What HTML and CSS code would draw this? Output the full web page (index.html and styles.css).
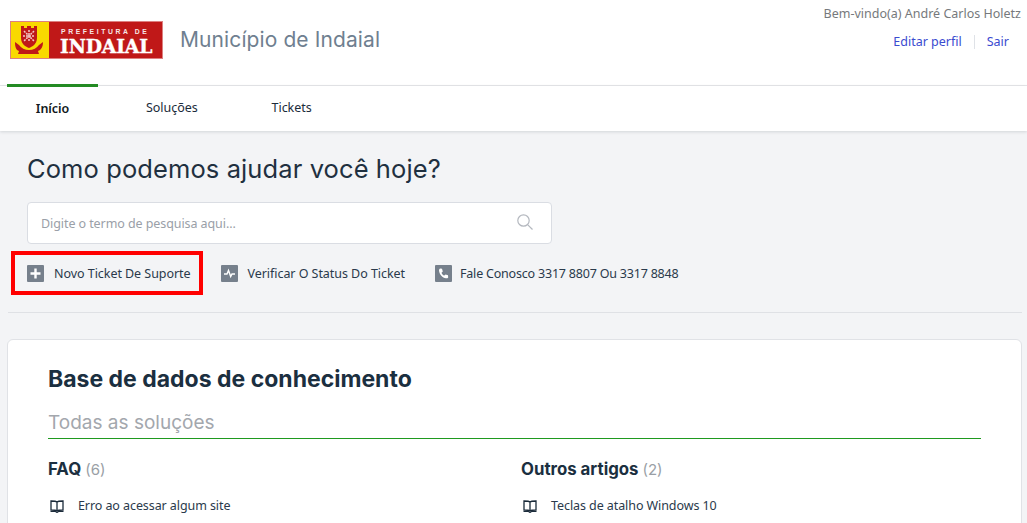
FILE: index.html
```html
<!DOCTYPE html>
<html lang="pt">
<head>
<meta charset="utf-8">
<title>Município de Indaial</title>
<link rel="stylesheet" href="styles.css">
</head>
<body>
<header class="top">
  <div class="brand">
    <svg class="logo" width="153" height="38" viewBox="0 0 153 38">
      <rect x="0" y="0" width="153" height="38" fill="#c01818"/>
      <rect x="0.5" y="0.5" width="152" height="37" fill="none" stroke="#dd8080"/>
      <rect x="1" y="1" width="38" height="36" fill="#f9d900"/>
      <path d="M11 5h3v2h3V5h4v2h3V5h3v12c0 6-5 9-8 10-3-1-8-4-8-10z" fill="#c01818"/>
      <path d="M5 21l4 3c2 3 6 5 10 5s8-2 10-5l4-3c0 5-2 8-5 9l1 3H8l1-3c-3-1-4-4-4-9z" fill="#c01818"/>
      <path d="M14 10l10 10M24 10L14 20M19 9v12M13 15h12" stroke="#f3c8c8" stroke-width="1.500" stroke-dasharray="2 1"/>
      <text x="51" y="13" class="logo-small">PREFEITURA DE</text>
      <text x="50" y="32" class="logo-big">INDAIAL</text>
    </svg>
    <span class="org">Município de Indaial</span>
  </div>
  <div class="user">
    <div class="welcome">Bem-vindo(a) André Carlos Holetz</div>
    <div class="user-links"><a href="#">Editar perfil</a><i class="pipe"></i><a href="#">Sair</a></div>
  </div>
</header>
<nav class="tabs">
  <a class="tab tab-active" href="#">Início</a>
  <a class="tab tab-sol" href="#">Soluções</a>
  <a class="tab tab-tic" href="#">Tickets</a>
</nav>
<main class="hero">
  <h1>Como podemos ajudar você hoje?</h1>
  <div class="search">
    <span>Digite o termo de pesquisa aqui...</span>
    <svg width="18" height="18" viewBox="0 0 18 18" fill="none" stroke="#b4b8bf" stroke-width="1.2"><circle cx="7.5" cy="7.5" r="5.7"/><path d="M11.8 11.8L16.5 16.5"/></svg>
  </div>
  <div class="actions">
    <a class="action action-first" href="#">
      <span class="ico"><svg width="17" height="17" viewBox="0 0 17 17"><path d="M8.5 3.5v10M3.5 8.5h10" stroke="#fff" stroke-width="2.4"/></svg></span>
      Novo Ticket De Suporte
      <span class="mark"></span>
    </a>
    <a class="action action-second" href="#">
      <span class="ico"><svg width="17" height="17" viewBox="0 0 17 17" fill="none"><path d="M3 9h3l1.5-3.5 2.2 6L11 9h3" stroke="#fff" stroke-width="1.4"/></svg></span>
      Verificar O Status Do Ticket
    </a>
    <a class="action action-third" href="#">
      <span class="ico"><svg width="17" height="17" viewBox="0 0 17 17"><path d="M5 3.5l2 .3.8 2.7-1.3 1.2c.5 1.3 1.4 2.3 2.8 2.9l1.3-1.2 2.4.9.2 2.1c-.5.8-1.4 1-2.3.9C7.500 12.800 4.500 9.800 4 5.500c0-.8.400-1.600 1-2z" fill="#fff"/></svg></span>
      Fale Conosco 3317 8807 Ou 3317 8848
    </a>
  </div>
  <hr class="sep">
  <section class="card">
    <h2>Base de dados de conhecimento</h2>
    <h3>Todas as soluções</h3>
    <div class="cols">
      <div class="col">
        <h4>FAQ <span>(6)</span></h4>
        <a class="art" href="#"><svg width="14" height="13" viewBox="0 0 14 13" fill="none" stroke="#1b2b3a" stroke-width="1.300"><path d="M7 2C6 1 4 1 1 1v9c3 0 5 0 6 1 1-1 3-1 6-1V1c-3 0-5 0-6 1zM7 2v9"/><path d="M0.500 11.500h5l1.500 1 1.500-1h5" stroke-width="1.200"/></svg>Erro ao acessar algum site</a>
      </div>
      <div class="col">
        <h4>Outros artigos <span>(2)</span></h4>
        <a class="art" href="#"><svg width="14" height="13" viewBox="0 0 14 13" fill="none" stroke="#1b2b3a" stroke-width="1.300"><path d="M7 2C6 1 4 1 1 1v9c3 0 5 0 6 1 1-1 3-1 6-1V1c-3 0-5 0-6 1zM7 2v9"/><path d="M0.500 11.500h5l1.500 1 1.500-1h5" stroke-width="1.200"/></svg>Teclas de atalho Windows 10</a>
      </div>
    </div>
  </section>
</main>
</body>
</html>
```
FILE: styles.css
```css
* { box-sizing: border-box; }
html, body { margin: 0; height: 523px; overflow: hidden; }
body { background: #f3f4f6; font-family: "Noto Sans", "Open Sans", sans-serif; color: #1b2b3a; }
a { text-decoration: none; color: inherit; }

.top { height: 86px; background: #fff; border-bottom: 1px solid #e6e7ea; display: flex; justify-content: space-between; padding: 0 6px 0 10px; }
.brand { display: flex; align-items: flex-start; padding-top: 21px; }
.logo { display: block; }
.logo-small { font: bold 6.800px "Liberation Sans", sans-serif; fill: #f6e6e6; letter-spacing: 2.600px; }
.logo-big { font: 900 18.800px "DejaVu Serif", serif; fill: #fff; stroke: #fff; stroke-width: .4px; letter-spacing: -.15px; }
.org { margin-left: 17px; margin-top: 5px; font: 400 21px/28px Inter, sans-serif; color: #6f7f90; letter-spacing: .1px; }
.user { padding-top: 6px; font-size: 12.500px; line-height: 16px; text-align: right; }
.welcome { color: #76797c; }
.user-links { margin-top: 12px; padding-right: 12px; display: flex; justify-content: flex-end; align-items: center; color: #3a4bd0; }
.pipe { width: 1px; height: 14px; background: #dfe2e7; margin: 0 12px; }

.tabs { height: 45px; background: #fff; display: flex; padding-left: 7px; box-shadow: 0 1px 3px rgba(40,50,70,.16); position: relative; }
.tab { font-size: 12.500px; line-height: 44px; letter-spacing: -.05px; color: #1b2b3a; }
.tab-active { width: 91px; text-align: center; border-top: 3px solid #238b23; margin-top: -2px; font-weight: 600; color: #101820; }
.tab-sol { margin-left: 48px; }
.tab-tic { margin-left: 74px; }

.hero { padding: 0 5px 0 7px; }
.hero h1 { margin: 22px 0 0 20px; font: 400 25.500px/32px Inter, sans-serif; color: #1f3040; letter-spacing: .1px; }
.search { margin: 17px 0 0 20px; width: 525px; height: 42px; background: #fff; border: 1px solid #dadde3; border-radius: 4px; display: flex; align-items: center; justify-content: space-between; padding: 0 17px 0 13px; font-size: 12.500px; letter-spacing: -.08px; color: #9aa0a8; }
.search svg { margin-top: -3px; }
.actions { margin: 18px 0 0 20px; display: flex; align-items: center; height: 22px; font-size: 12.500px; color: #2a3a4b; letter-spacing: -.05px; }
.action { display: flex; align-items: center; position: relative; white-space: nowrap; }
.ico { width: 17px; height: 17px; background: #76808c; border-radius: 1px; margin-right: 10px; display: block; }
.ico svg { display: block; }
.action-second { margin-left: 30px; }
.action-third { margin-left: 30px; letter-spacing: -.2px; }
.action-third .ico { margin-right: 8px; }
.mark { position: absolute; left: -16px; top: -14px; width: 192px; height: 44px; border: 4px solid #f00; }

.sep { border: 0; border-top: 1px solid #dfe1e5; margin: 28px 0 0 1px; }
.card { margin-top: 26px; height: 300px; background: #fff; border: 1px solid #e0e2e6; border-radius: 6px; padding: 24px 40px 0; }
.card h2 { margin: 0; font: 700 23px/30px Inter, sans-serif; color: #1b2f40; letter-spacing: 0; }
.card h3 { margin: 16px 0 0; font: 400 19px/26px Inter, sans-serif; color: #a3a7ad; border-bottom: 1px solid #1f9a1f; padding-bottom: 2px; }
.cols { display: flex; margin-top: 19px; }
.col { flex: 0 0 473px; }
.col h4 { margin: 0; font: 700 16.800px/22px Inter, sans-serif; color: #1b2f40; }
.col h4 span { font-weight: 400; font-size: 15px; color: #9a9fa6; }
.art { display: flex; align-items: center; margin-top: 17px; font-size: 12.500px; line-height: 16px; color: #2a3a4b; letter-spacing: -.08px; }
.art svg { margin: 0 14px 0 2px; }
```
